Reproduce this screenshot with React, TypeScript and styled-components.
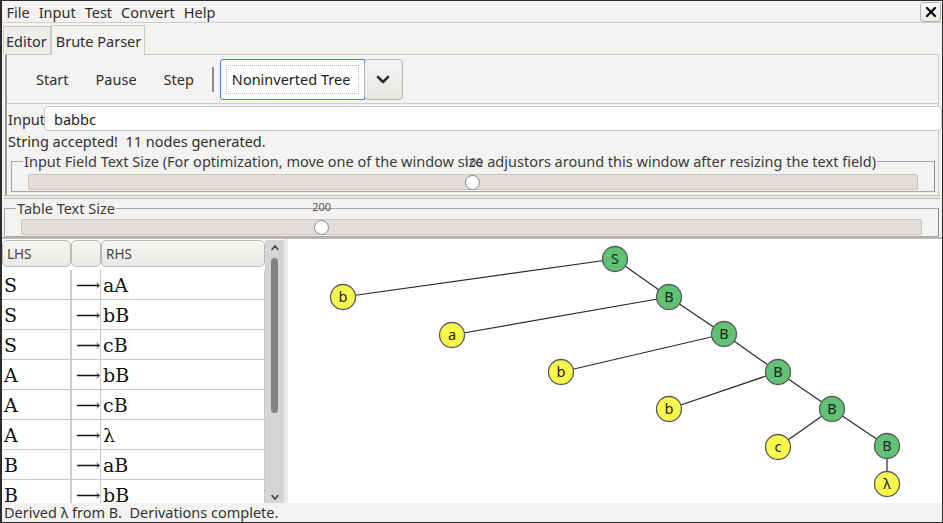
import React from "react";
import styled, {createGlobalStyle} from "styled-components";

const GlobalStyle = createGlobalStyle`
  html, body {
    margin: 0;
    padding: 0;
    background: #f4f3f1;
  }
  * {
    box-sizing: border-box;
  }
`;

const sans = `"Noto Sans", "DejaVu Sans", sans-serif`;

const Window = styled.div`
  width: 943px;
  height: 523px;
  display: flex;
  flex-direction: column;
  overflow: hidden;
  border: 1px solid #2c2c2c;
  border-left-width: 2px;
  background: #f4f3f1;
  font-family: ${sans};
  font-size: 14.5px;
  color: #2e2e2e;
`;

const MenuBar = styled.div`
  height: 22px;
  flex-shrink: 0;
  display: flex;
  align-items: center;
  padding-left: 0;
  border-bottom: 1px solid #d2cfca;
  position: relative;
`;

const MenuItem = styled.span`
  padding: 0 4.5px;
  line-height: 20px;
`;

const CloseButton = styled.button`
  position: absolute;
  right: 1px;
  top: 1px;
  width: 21px;
  height: 20px;
  padding: 0;
  border: 1px solid #b3b0ab;
  border-radius: 3px;
  background: linear-gradient(#fbfbfa, #ebe9e6);
  display: flex;
  align-items: center;
  justify-content: center;
`;

const TabRow = styled.div`
  height: 31px;
  flex-shrink: 0;
  display: flex;
  align-items: flex-end;
  padding-left: 1px;
`;

const Tab = styled.div<{ active?: boolean }>`
  height: ${p => (p.active ? 30 : 28)}px;
  padding: 1px 3px 0 ${p => (p.active ? 4 : 2)}px;
  display: flex;
  align-items: center;
  border: 1px solid #cdc9c3;
  border-bottom: none;
  background: ${p => (p.active ? "#f4f3f1" : "#efedea")};
  margin-bottom: ${p => (p.active ? -1 : 0)}px;
  position: relative;
  z-index: ${p => (p.active ? 2 : 1)};
`;

const TabPanel = styled.div`
  margin: 0 3px 0 3px;
  height: 141px;
  flex-shrink: 0;
  border: 1px solid #cdc9c3;
  border-left: 2px solid #9a9894;
  border-bottom: none;
  display: flex;
  flex-direction: column;
`;

const Toolbar = styled.div`
  height: 49px;
  flex-shrink: 0;
  display: flex;
  align-items: center;
  padding-left: 15px;
  border-bottom: 1px solid #cfccc7;
`;

const ToolButton = styled.span`
  padding: 0 13px 0 14px;
  line-height: 20px;
`;

const ToolSeparator = styled.div`
  width: 2px;
  height: 25px;
  background: #8e8c88;
  margin: 0 6px 0 5px;
`;

const Combo = styled.div`
  width: 145px;
  height: 41px;
  border: 1px solid #3d86e0;
  border-radius: 3px 0 0 3px;
  background: #fff;
  padding: 5px;
`;

const ComboFocus = styled.div`
  height: 100%;
  border: 1px dotted #b8b8b8;
  display: flex;
  align-items: center;
  padding-left: 5px;
  color: #222;
  white-space: nowrap;
  overflow: hidden;
`;

const DropButton = styled.div`
  width: 39px;
  height: 41px;
  border: 1px solid #b9b6b1;
  border-radius: 4px;
  background: linear-gradient(#f6f5f3, #e7e5e2);
  display: flex;
  align-items: center;
  justify-content: center;
  margin-left: -1px;
`;

const InputRow = styled.div`
  display: flex;
  align-items: center;
  margin-top: 2px;
  margin-right: -4px;
`;

const InputLabel = styled.span`
  padding-left: 1px;
  width: 37px;
`;

const TextField = styled.div`
  flex: 1;
  height: 25px;
  border: 1px solid #cbc8c3;
  border-radius: 4px;
  background: #fff;
  padding-left: 9px;
  display: flex;
  align-items: center;
  color: #222;
`;

const StatusLine = styled.div`
  padding-left: 1px;
  line-height: 20px;
  white-space: pre;
`;

const Fieldset = styled.fieldset<{ inset: number; top: number; gap: number }>`
  margin: ${p => p.top}px 3px 0 ${p => p.inset}px;
  padding: ${p => p.gap}px 16px 1px 16px;
  border: 1px solid #a9a7a3;
  border-right-color: #8c8a86;
  position: relative;
  min-width: 0;
  flex-shrink: 0;
`;

const Legend = styled.legend`
  padding: 0 1px;
  margin-left: -5px;
  line-height: 16px;
  color: #3a3a3a;
  white-space: nowrap;
`;

const Track = styled.div`
  height: 16px;
  border: 1px solid #c9c6c1;
  border-radius: 2px;
  background: #e1dedb;
  position: relative;
`;

const Thumb = styled.div`
  position: absolute;
  top: 0;
  width: 15px;
  height: 15px;
  margin-left: -8px;
  border-radius: 50%;
  background: #fff;
  border: 1px solid #8a8884;
`;

const ValueLabel = styled.span`
  position: absolute;
  top: -21px;
  transform: translateX(-50%);
  font-size: 11px;
  color: #555;
`;

const PaneSeparator = styled.div`
  height: 4px;
  flex-shrink: 0;
  margin: 0 2px;
  border-top: 1px solid #c2beb8;
  border-bottom: 1px solid #c2beb8;
  background: #ebe9e5;
`;

const Split = styled.div`
  flex: 1;
  display: flex;
  min-height: 0;
  overflow: hidden;
  border-top: 2px solid #bab7b2;
`;

const TableArea = styled.div`
  width: 283px;
  display: flex;
  background: #fff;
  padding-top: 1px;
  overflow: hidden;
`;

const Table = styled.div`
  width: 263px;
  display: grid;
  grid-template-columns: 69px 30px 164px;
  grid-auto-rows: 30px;
  align-content: start;
`;

const HeaderCell = styled.div`
  height: 27px;
  border: 1px solid #bdbab5;
  border-radius: 5px;
  background: linear-gradient(#f7f6f4, #ebe9e6);
  padding-left: 4px;
  display: flex;
  align-items: center;
  font-size: 13.5px;
  color: #444;
`;

const Cell = styled.div<{ arrow?: boolean }>`
  border-bottom: 1px solid #c8c8c8;
  border-right: 1px solid #c8c8c8;
  border-left: ${p => (p.arrow ? "1px solid #d4d4d4" : "0")};
  display: flex;
  align-items: center;
  padding-left: ${p => (p.arrow ? 4 : 2)}px;
  font-family: "DejaVu Serif", "Liberation Serif", serif;
  font-size: ${p => (p.arrow ? 17 : 19)}px;
  color: #111;
  overflow: hidden;
`;

const ScrollBar = styled.div`
  width: 20px;
  background: #d6d5d3;
  display: flex;
  flex-direction: column;
  align-items: center;
  padding: 4px 0 2px;
  border-right: 1px solid #ecebe9;
`;

const ScrollThumb = styled.div`
  width: 7px;
  height: 155px;
  margin-top: 7px;
  border-radius: 4px;
  background: #818181;
`;

const ScrollSpacer = styled.div`
  flex: 1;
`;

const Divider = styled.div`
  width: 3px;
  background: #ecebe9;
`;

const TreeArea = styled.div`
  flex: 1;
  background: #fff;
  overflow: hidden;
`;

const StatusBar = styled.div`
  height: 19px;
  flex-shrink: 0;
  padding-left: 2px;
  line-height: 19px;
  white-space: pre;
  color: #333;
`;

const Chevron = () => (
  <svg width="14" height="9" viewBox="0 0 14 9">
    <path d="M2 2 L7 7 L12 2" fill="none" stroke="#2f2f2f" strokeWidth="2.6" strokeLinecap="round" strokeLinejoin="round"/>
  </svg>
);

const SmallChevron: React.FC<{ up?: boolean }> = ({up}) => (
  <svg width="10" height="7" viewBox="0 0 10 7">
    <path d={up ? "M2 5.5 L5 2 L8 5.5" : "M2 1.5 L5 5 L8 1.5"} fill="none" stroke="#444" strokeWidth="1.6" strokeLinecap="round"/>
  </svg>
);

const Slider: React.FC<{ value: number; max: number }> = ({value, max}) => {
  const pct = (value / max) * 100;
  return (
    <Track>
      <ValueLabel style={{left: `${pct}%`}}>{value}</ValueLabel>
      <Thumb style={{left: `${pct}%`}}/>
    </Track>
  );
};

const rules: [string, string][] = [
  ["S", "aA"], ["S", "bB"], ["S", "cB"], ["A", "bB"],
  ["A", "cB"], ["A", "λ"], ["B", "aB"], ["B", "bB"],
];

type TreeNode = { id: string; label: string; x: number; y: number; leaf: boolean };

const nodes: TreeNode[] = [
  {id: "s", label: "S", x: 327, y: 20, leaf: false},
  {id: "b0", label: "b", x: 55, y: 58, leaf: true},
  {id: "B1", label: "B", x: 381, y: 58, leaf: false},
  {id: "a", label: "a", x: 164, y: 96, leaf: true},
  {id: "B2", label: "B", x: 436, y: 95, leaf: false},
  {id: "b1", label: "b", x: 273, y: 133, leaf: true},
  {id: "B3", label: "B", x: 490, y: 133, leaf: false},
  {id: "b2", label: "b", x: 381, y: 170, leaf: true},
  {id: "B4", label: "B", x: 544, y: 170, leaf: false},
  {id: "c", label: "c", x: 490, y: 208, leaf: true},
  {id: "B5", label: "B", x: 599, y: 207, leaf: false},
  {id: "l", label: "λ", x: 599, y: 245, leaf: true},
];

const edges: [string, string][] = [
  ["s", "b0"], ["s", "B1"], ["B1", "a"], ["B1", "B2"], ["B2", "b1"], ["B2", "B3"],
  ["B3", "b2"], ["B3", "B4"], ["B4", "c"], ["B4", "B5"], ["B5", "l"],
];

const Tree = () => {
  const byId = Object.fromEntries(nodes.map(n => [n.id, n]));
  return (
    <svg width="653" height="263" viewBox="0 0 653 263">
      {edges.map(([a, b]) => (
        <line key={a + b} x1={byId[a].x} y1={byId[a].y} x2={byId[b].x} y2={byId[b].y} stroke="#2a2a2a" strokeWidth="1.2"/>
      ))}
      {nodes.map(n => (
        <g key={n.id}>
          <circle cx={n.x} cy={n.y} r="12.5" fill={n.leaf ? "#f7f74c" : "#5fc274"} stroke="#5a5a5a" strokeWidth="1.3"/>
          <text x={n.x} y={n.y + 5} textAnchor="middle" fontFamily={sans} fontSize="14.5" fill="#1e1e1e">{n.label}</text>
        </g>
      ))}
    </svg>
  );
};

const App = () => (
  <>
    <GlobalStyle/>
    <Window>
      <MenuBar>
        <MenuItem>File</MenuItem>
        <MenuItem>Input</MenuItem>
        <MenuItem>Test</MenuItem>
        <MenuItem>Convert</MenuItem>
        <MenuItem>Help</MenuItem>
        <CloseButton>
          <svg width="12" height="12" viewBox="0 0 12 12">
            <path d="M2 2 L10 10 M10 2 L2 10" stroke="#111" strokeWidth="2.4" strokeLinecap="round"/>
          </svg>
        </CloseButton>
      </MenuBar>
      <TabRow>
        <Tab>Editor</Tab>
        <Tab active>Brute Parser</Tab>
      </TabRow>
      <TabPanel>
        <Toolbar>
          <ToolButton>Start</ToolButton>
          <ToolButton>Pause</ToolButton>
          <ToolButton>Step</ToolButton>
          <ToolSeparator/>
          <Combo>
            <ComboFocus>Noninverted Tree</ComboFocus>
          </Combo>
          <DropButton><Chevron/></DropButton>
        </Toolbar>
        <InputRow>
          <InputLabel>Input</InputLabel>
          <TextField>babbc</TextField>
        </InputRow>
        <StatusLine>String accepted!  11 nodes generated.</StatusLine>
        <Fieldset inset={4} top={2} gap={5}>
          <Legend>Input Field Text Size (For optimization, move one of the window size adjustors around this window after resizing the text field)</Legend>
          <Slider value={100} max={200}/>
        </Fieldset>
      </TabPanel>
      <PaneSeparator/>
      <Fieldset inset={2} top={1} gap={3}>
        <Legend>Table Text Size</Legend>
        <Slider value={200} max={600}/>
      </Fieldset>
      <Split>
        <TableArea>
          <Table>
            <HeaderCell>LHS</HeaderCell>
            <HeaderCell/>
            <HeaderCell>RHS</HeaderCell>
            {rules.map(([l, r], i) => (
              <React.Fragment key={i}>
                <Cell>{l}</Cell>
                <Cell arrow>⟶</Cell>
                <Cell>{r}</Cell>
              </React.Fragment>
            ))}
          </Table>
          <ScrollBar>
            <SmallChevron up/>
            <ScrollThumb/>
            <ScrollSpacer/>
            <SmallChevron/>
          </ScrollBar>
        </TableArea>
        <Divider/>
        <TreeArea>
          <Tree/>
        </TreeArea>
      </Split>
      <StatusBar>Derived λ from B.  Derivations complete.</StatusBar>
    </Window>
  </>
);

export default App;
